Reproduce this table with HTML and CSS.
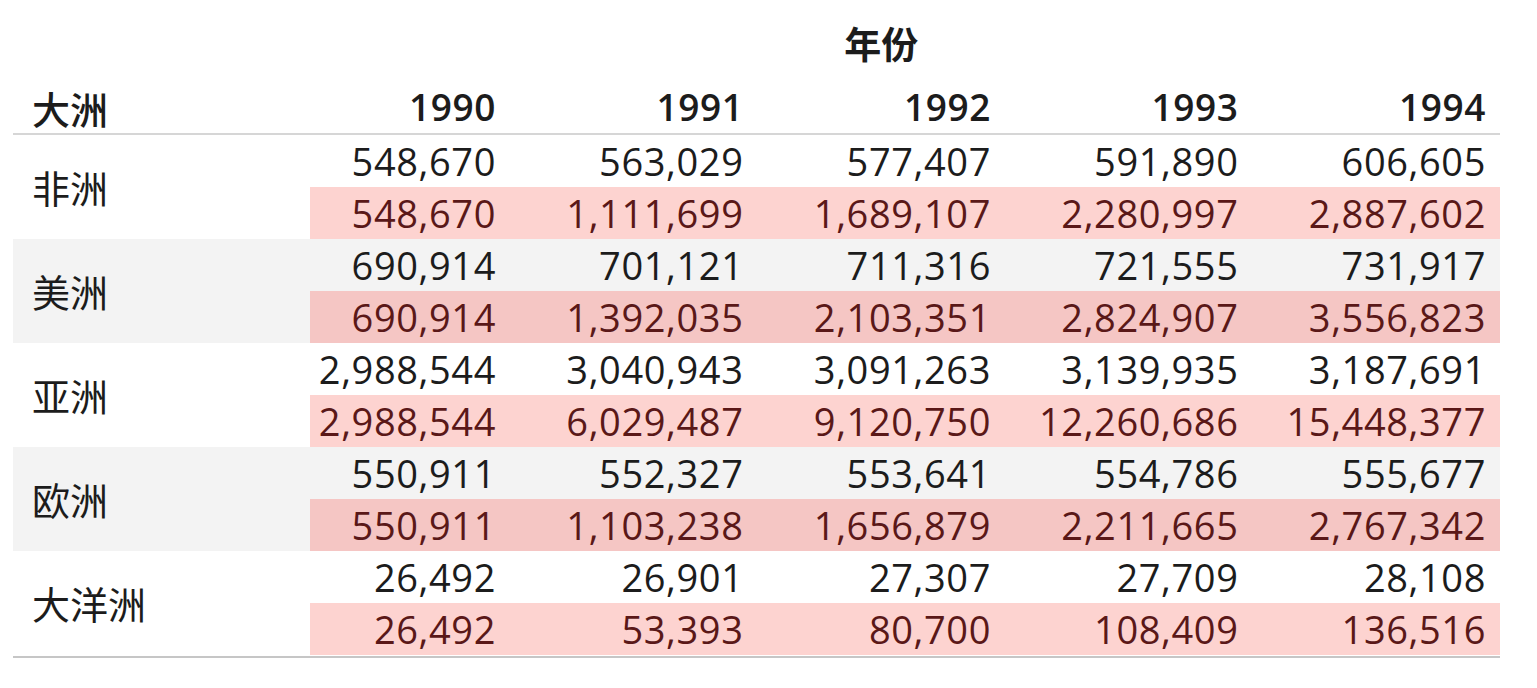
FILE: index.html
```html
<!DOCTYPE html>
<html lang="zh">
<head>
<meta charset="utf-8">
<title>年份 大洲</title>
<link rel="stylesheet" href="styles.css">
</head>
<body>
<div class="table">
  <div class="title-row">
    <div class="title">年份</div>
  </div>
  <div class="row head">
    <div class="label">大洲</div>
    <div class="cell">1990</div>
    <div class="cell">1991</div>
    <div class="cell">1992</div>
    <div class="cell">1993</div>
    <div class="cell">1994</div>
  </div>

  <div class="group">
    <div class="label">非洲</div>
    <div class="cell">548,670</div><div class="cell">563,029</div><div class="cell">577,407</div><div class="cell">591,890</div><div class="cell">606,605</div>
    <div class="cell cum">548,670</div><div class="cell cum">1,111,699</div><div class="cell cum">1,689,107</div><div class="cell cum">2,280,997</div><div class="cell cum">2,887,602</div>
  </div>
  <div class="group alt">
    <div class="label">美洲</div>
    <div class="cell">690,914</div><div class="cell">701,121</div><div class="cell">711,316</div><div class="cell">721,555</div><div class="cell">731,917</div>
    <div class="cell cum">690,914</div><div class="cell cum">1,392,035</div><div class="cell cum">2,103,351</div><div class="cell cum">2,824,907</div><div class="cell cum">3,556,823</div>
  </div>
  <div class="group">
    <div class="label">亚洲</div>
    <div class="cell">2,988,544</div><div class="cell">3,040,943</div><div class="cell">3,091,263</div><div class="cell">3,139,935</div><div class="cell">3,187,691</div>
    <div class="cell cum">2,988,544</div><div class="cell cum">6,029,487</div><div class="cell cum">9,120,750</div><div class="cell cum">12,260,686</div><div class="cell cum">15,448,377</div>
  </div>
  <div class="group alt">
    <div class="label">欧洲</div>
    <div class="cell">550,911</div><div class="cell">552,327</div><div class="cell">553,641</div><div class="cell">554,786</div><div class="cell">555,677</div>
    <div class="cell cum">550,911</div><div class="cell cum">1,103,238</div><div class="cell cum">1,656,879</div><div class="cell cum">2,211,665</div><div class="cell cum">2,767,342</div>
  </div>
  <div class="group last">
    <div class="label">大洋洲</div>
    <div class="cell">26,492</div><div class="cell">26,901</div><div class="cell">27,307</div><div class="cell">27,709</div><div class="cell">28,108</div>
    <div class="cell cum">26,492</div><div class="cell cum">53,393</div><div class="cell cum">80,700</div><div class="cell cum">108,409</div><div class="cell cum">136,516</div>
  </div>
</div>
</body>
</html>
```

FILE: styles.css
```css
html, body {
  margin: 0;
  padding: 0;
  background: #ffffff;
}

body {
  font-family: "Open Sans", "Noto Sans CJK SC", sans-serif;
  color: #1c1c1c;
}

.table {
  margin-left: 13px;
  width: 1487px;
}

.title-row {
  height: 72px;
  padding-top: 8px;
  display: grid;
  grid-template-columns: 249.5px 1237.5px;
}

.title {
  grid-column: 2;
  text-align: center;
  font-family: "Noto Sans CJK SC", sans-serif;
  font-weight: 700;
  font-size: 37px;
  line-height: 70px;
}

.row,
.group {
  display: grid;
  grid-template-columns: 297px 200px repeat(4, 247.5px);
}

.head {
  height: 53px;
  border-bottom: 2px solid #d6d6d6;
  align-items: center;
}

.head .cell {
  font-weight: 600;
  font-size: 37px;
  line-height: 46px;
  letter-spacing: 0.6px;
  padding-bottom: 7px;
}

.head .label {
  font-weight: 500;
  padding-bottom: 6px;
}

.label {
  font-family: "Noto Sans CJK SC", sans-serif;
  font-size: 38px;
  padding-left: 19px;
  display: flex;
  align-items: center;
}

.group .label {
  grid-row: span 2;
  padding-bottom: 2px;
}

.group {
  grid-template-rows: 52px 52px;
}

.cell {
  text-align: right;
  padding-right: 14px;
  font-size: 38px;
  line-height: 52px;
  letter-spacing: 0.6px;
}

.alt {
  background: #f3f3f3;
}

.cum {
  background: #fdd3d0;
  color: #5a1818;
}

.alt .cum {
  background: #f5c6c4;
}

.last {
  border-bottom: 2px solid #c6c6c6;
  padding-bottom: 1px;
}
```
